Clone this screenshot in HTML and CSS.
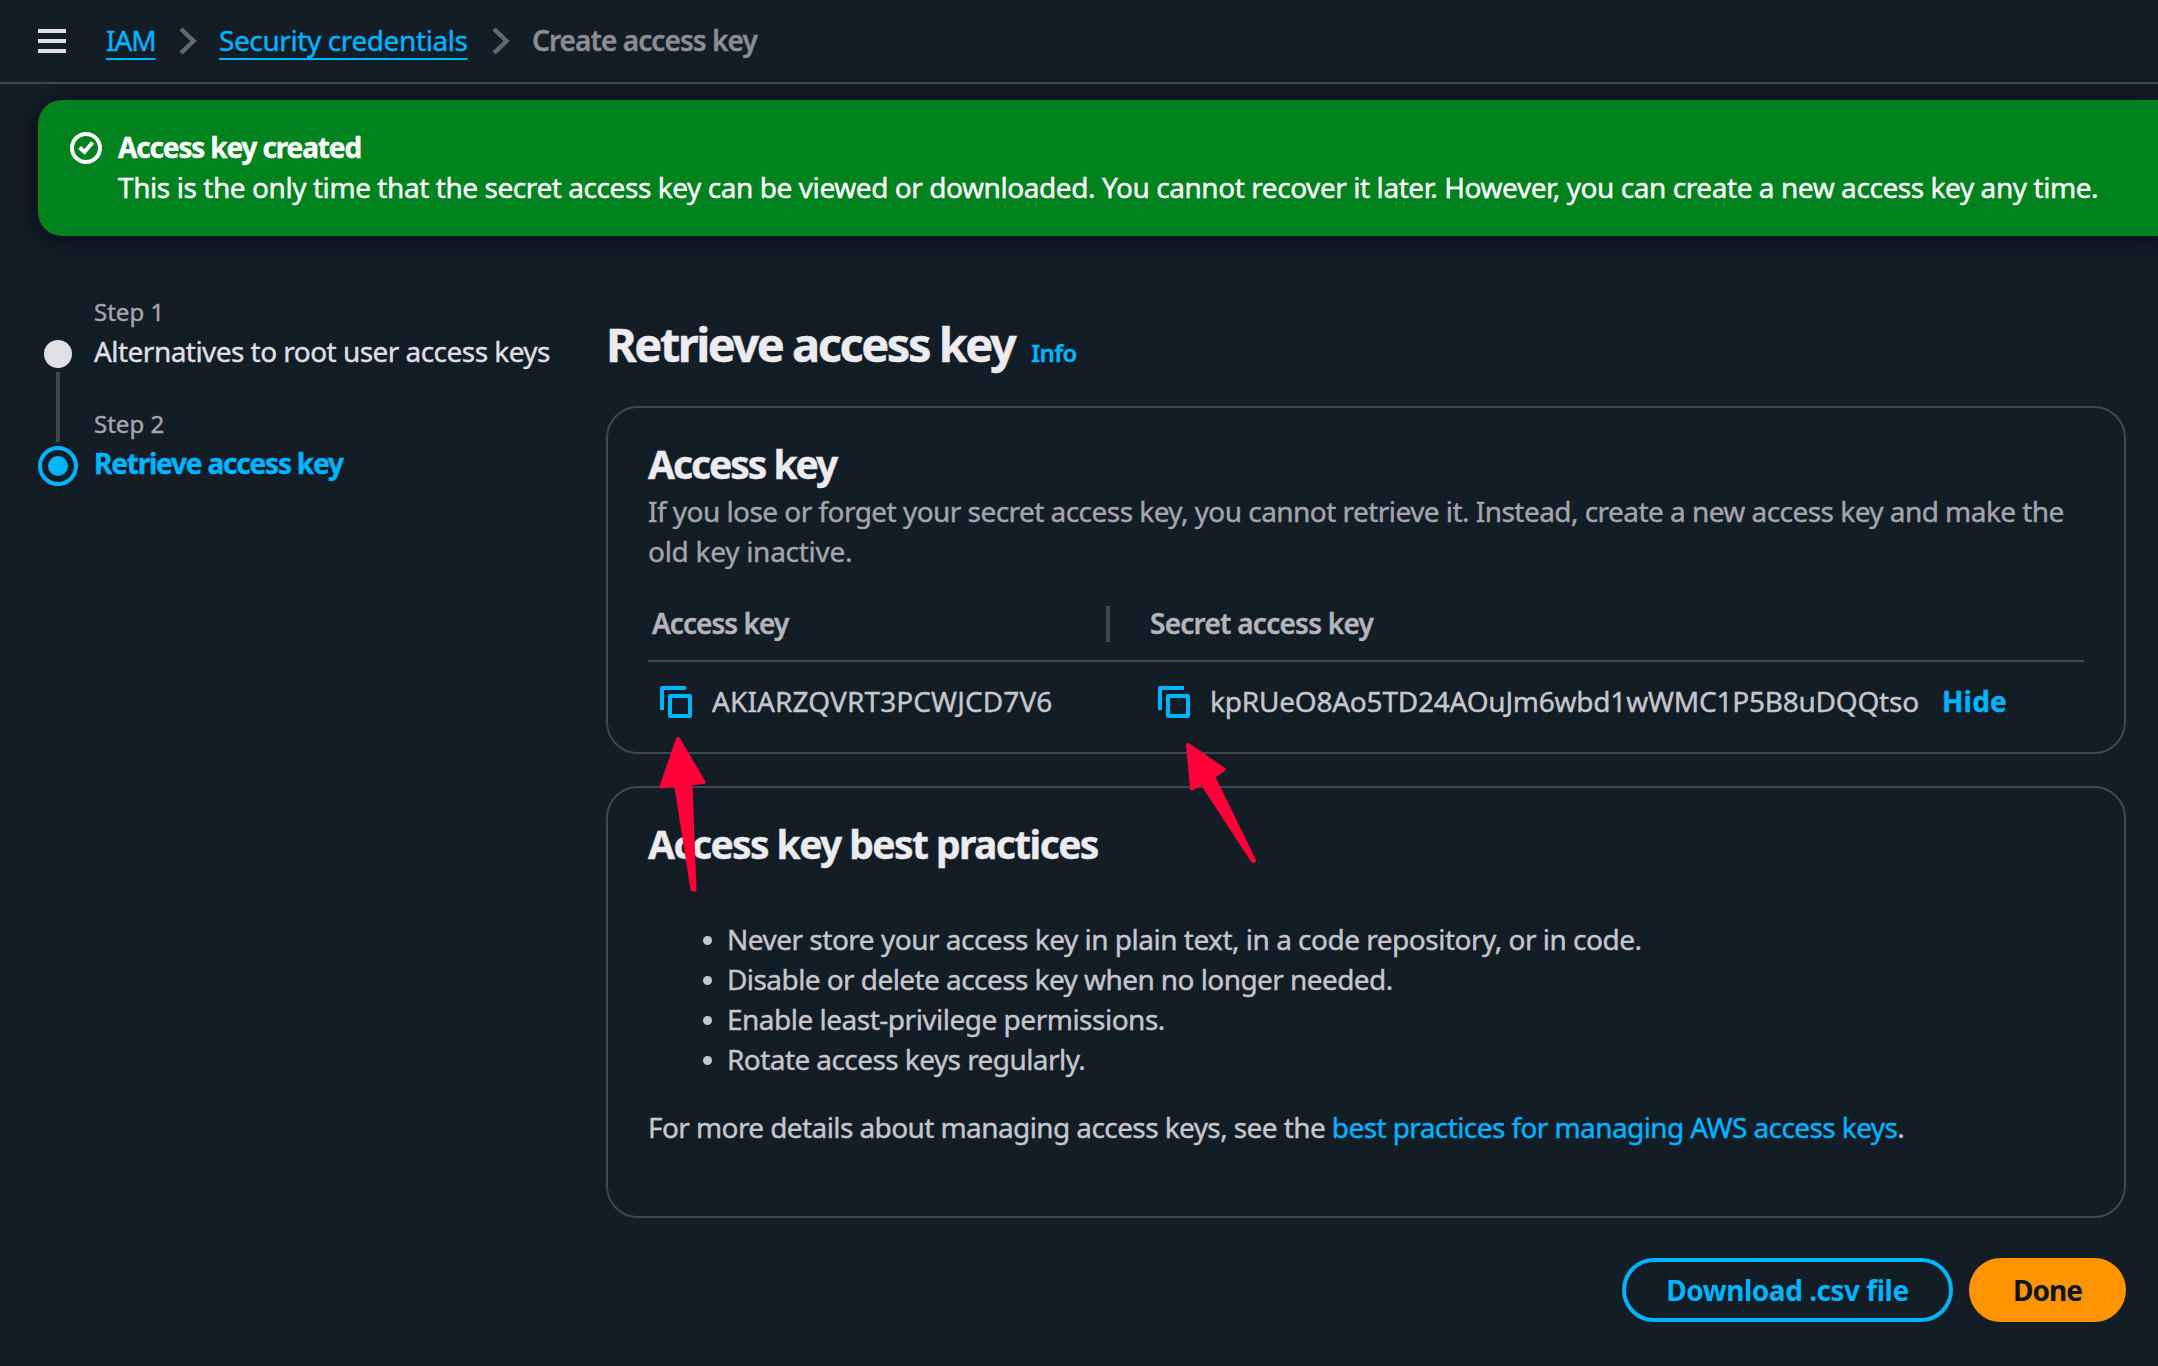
FILE: index.html
```html
<!DOCTYPE html>
<html lang="en">
<head>
<meta charset="utf-8">
<title>Create access key | IAM</title>
<link rel="stylesheet" href="styles.css">
</head>
<body>
<header class="topbar">
  <svg class="menu" width="28" height="24" viewBox="0 0 28 24"><path d="M0 2h28M0 12h28M0 22h28"/></svg>
  <nav class="crumbs">
    <a class="crumb crumb-iam" href="#">IAM</a>
    <svg class="sep" width="18" height="28" viewBox="0 0 18 28"><path d="M2 2l12.500 12L2 26"/></svg>
    <a class="crumb crumb-sec" href="#">Security credentials</a>
    <svg class="sep" width="18" height="28" viewBox="0 0 18 28"><path d="M2 2l12.500 12L2 26"/></svg>
    <span class="crumb-current">Create access key</span>
  </nav>
</header>

<section class="banner">
  <svg class="banner-icon" width="32" height="32" viewBox="0 0 32 32"><circle cx="16" cy="16" r="14"/><path d="M9.500 15.500l5 4.500 8-9.500"/></svg>
  <div class="banner-text">
    <div class="banner-title">Access key created</div>
    <div class="banner-desc">This is the only time that the secret access key can be viewed or downloaded. You cannot recover it later. However, you can create a new access key any time.</div>
  </div>
</section>

<main class="layout">
  <aside class="steps">
    <svg class="track" width="40" height="146" viewBox="0 0 40 146">
      <circle class="track-done" cx="20" cy="14" r="14"/>
      <rect class="track-line" x="18" y="32" width="4" height="70"/>
      <circle class="track-ring" cx="20" cy="126" r="18"/>
      <circle class="track-now" cx="20" cy="126" r="10"/>
    </svg>
    <div class="step-list">
      <div class="step">
        <div class="step-label">Step 1</div>
        <div class="step-name">Alternatives to root user access keys</div>
      </div>
      <div class="step">
        <div class="step-label">Step 2</div>
        <div class="step-name step-active">Retrieve access key</div>
      </div>
    </div>
  </aside>

  <div class="content">
    <div class="page-head">
      <h1>Retrieve access key</h1>
      <a class="info" href="#">Info</a>
    </div>

    <section class="card card-key">
      <h2 class="key-title">Access key</h2>
      <p class="card-desc">If you lose or forget your secret access key, you cannot retrieve it. Instead, create a new access key and make the<br><span class="desc-end">old key inactive.</span></p>
      <div class="row row-head">
        <div class="th th-first">Access key</div>
        <div class="th">Secret access key</div>
      </div>
      <div class="row row-data">
        <div class="td">
          <svg class="copy" width="32" height="32" viewBox="0 0 32 32"><path d="M2 24V2h24"/><rect x="10" y="10" width="20" height="20"/></svg>
          <span class="key-id">AKIARZQVRT3PCWJCD7V6</span>
        </div>
        <div class="td">
          <svg class="copy" width="32" height="32" viewBox="0 0 32 32"><path d="M2 24V2h24"/><rect x="10" y="10" width="20" height="20"/></svg>
          <span class="key-secret">kpRUeO8Ao5TD24AOuJm6wbd1wWMC1P5B8uDQQtso</span>
          <a class="hide" href="#">Hide</a>
        </div>
      </div>
      <svg class="arrow arrow-one" width="60" height="170" viewBox="650 730 60 170"><path d="M678 739L703.500 782L690.500 783.500L694.500 889.500L692.500 889.500L676 784.500L661.500 786.500Z"/></svg>
      <svg class="arrow arrow-two" width="80" height="130" viewBox="1180 738 80 130"><path d="M1188 745L1223.500 769.500L1213 776.500L1254 860.500L1252.500 860.500L1202 783L1192 788.500Z"/></svg>
    </section>

    <section class="card card-tips">
      <h2 class="tips-title">Access key best practices</h2>
      <ul class="tips">
        <li>Never store your access key in plain text, in a code repository, or in code.</li>
        <li class="tip-tight">Disable or delete access key when no longer needed.</li>
        <li>Enable least-privilege permissions.</li>
        <li class="tip-tight">Rotate access keys regularly.</li>
      </ul>
      <p class="more">For more details about managing access keys, see the <a href="#">best practices for managing AWS access keys</a>.</p>
    </section>

    <div class="actions">
      <button class="btn btn-outline">Download .csv file</button>
      <button class="btn btn-primary">Done</button>
    </div>
  </div>
</main>
</body>
</html>
```
FILE: styles.css
```css
* { box-sizing: border-box; }

body {
  margin: 0;
  min-height: 1366px;
  background: #131d26;
  color: #c6c6cd;
  font-family: "Noto Sans", "Open Sans", sans-serif;
  font-size: 28px;
  line-height: 40px;
  white-space: nowrap;
  overflow: hidden;
  -webkit-text-stroke: 0.4px currentColor;
}

h1, h2, p, ul { margin: 0; padding: 0; }
a { color: #00b4ff; text-decoration: none; -webkit-text-stroke-color: #00b4ff; }
svg { display: block; flex: none; fill: none; }

/* Top bar */
.topbar {
  display: flex;
  align-items: center;
  height: 84px;
  padding: 0 0 2px 38px;
  border-bottom: 2px solid #424650;
}
.menu { stroke: #dfdfe4; stroke-width: 4; margin-top: 2px; }
.crumbs { display: flex; align-items: center; margin-left: 40px; }
.crumb {
  text-decoration: underline;
  text-decoration-thickness: 2px;
  text-underline-offset: 7px;
  text-decoration-skip-ink: none;
}
.crumb-iam { width: 49px; letter-spacing: -1.1px; }
.crumb-sec { width: 249px; letter-spacing: -0.4px; }
.sep { stroke: #656871; stroke-width: 4.5; margin: 1px 22px 0 24px; }
.crumb-current { color: #8c8c94; font-weight: 600; letter-spacing: -0.93px; }

/* Success banner */
.banner {
  display: flex;
  gap: 16px;
  height: 136px;
  margin: 16px 0 0 38px;
  padding: 27px 0 0 32px;
  border-radius: 24px 0 0 24px;
  background: #00821e;
  color: #fff;
  box-shadow: 0 4px 20px 1px rgba(0, 7, 22, 0.7);
}
.banner-icon { margin-top: 5px; stroke: #fff; stroke-width: 4; }
.banner-title { font-weight: 700; letter-spacing: -1.15px; }
.banner-desc { letter-spacing: -0.43px; }

/* Page columns */
.layout {
  display: grid;
  grid-template-columns: 568px 1520px;
  padding-left: 38px;
}

/* Step navigation */
.steps { display: flex; gap: 16px; padding-top: 57px; }
.track { margin-top: 47px; }
.track-done { fill: #dfdfe4; }
.track-line { fill: #424650; }
.track-ring { stroke: #00b4ff; stroke-width: 4; }
.track-now { fill: #00b4ff; }
.step-list { display: flex; flex-direction: column; gap: 34px; }
.step-label { font-size: 24px; line-height: 38px; color: #a4a4ad; }
.step-name { color: #dfdfe4; letter-spacing: -0.54px; }
.step-active { color: #00b4ff; font-weight: 700; letter-spacing: -1.2px; }

/* Heading */
.content { padding-top: 80px; }
.page-head { display: flex; align-items: baseline; gap: 17px; height: 56px; }
h1 {
  color: #ebebf0;
  font-size: 47px;
  line-height: 56px;
  font-weight: 700;
  letter-spacing: -2.5px;
}
.info { font-size: 24px; font-weight: 600; letter-spacing: -0.6px; }

/* Cards */
.card {
  position: relative;
  border: 2px solid #424650;
  border-radius: 32px;
  padding: 32px 40px 0;
}
.card-key { height: 348px; margin-top: 34px; }
.card-tips { height: 432px; margin-top: 32px; }
h2 { color: #ebebf0; font-size: 39px; line-height: 48px; font-weight: 700; }
.key-title { letter-spacing: -2.05px; }
.tips-title { letter-spacing: -1.6px; }
.card-desc { margin-top: 3px; color: #a4a4ad; letter-spacing: -0.545px; }
.desc-end { letter-spacing: -0.28px; }

/* Key table */
.row { display: grid; grid-template-columns: 462px 1fr; column-gap: 36px; }
.row-head { height: 59px; margin-top: 32px; border-bottom: 2px solid #424650; }
.th { padding-left: 4px; color: #b4b4bb; font-weight: 600; letter-spacing: -0.75px; }
.th-first {
  letter-spacing: -0.95px;
  background: linear-gradient(#424650, #424650) right 3px / 4px 36px no-repeat;
}
.row-data { margin-top: 19px; }
.td { display: flex; align-items: center; padding-left: 12px; }
.copy { margin: 2px 20px 0 0; stroke: #00b4ff; stroke-width: 4; stroke-linejoin: round; }
.key-id { letter-spacing: 0.1px; }
.key-secret { width: 732px; letter-spacing: -0.22px; }
.hide { font-weight: 700; letter-spacing: 0.17px; }

/* Pointer arrows drawn over the cards */
.arrow { position: absolute; z-index: 1; fill: #ff0038; stroke: #ff0038; stroke-width: 4; stroke-linejoin: round; }
.arrow-one { left: 42px; top: 322px; }
.arrow-two { left: 572px; top: 330px; }
.card-key { z-index: 1; }

/* Best practices */
.tips { margin-top: 51px; padding-left: 55px; list-style: none; letter-spacing: -0.5px; }
.tips li { display: flex; align-items: center; gap: 15px; }
.tips .tip-tight { letter-spacing: -0.57px; }
.tips li::before {
  content: "";
  width: 9px;
  height: 9px;
  margin-top: 3px;
  border-radius: 50%;
  background: #c6c6cd;
}
.more { margin-top: 28px; letter-spacing: -0.59px; }

/* Footer buttons */
.actions { display: flex; justify-content: flex-end; gap: 16px; margin-top: 40px; }
.btn {
  height: 64px;
  padding: 0 0 1px;
  border: 4px solid #00b4ff;
  border-radius: 32px;
  background: none;
  font: inherit;
  font-weight: 700;
  -webkit-text-stroke: 0;
}
.btn-outline { width: 331px; color: #00b4ff; letter-spacing: -0.49px; }
.btn-primary { width: 157px; border-color: #ff9400; background: #ff9400; color: #0f141a; letter-spacing: -1px; }
```
